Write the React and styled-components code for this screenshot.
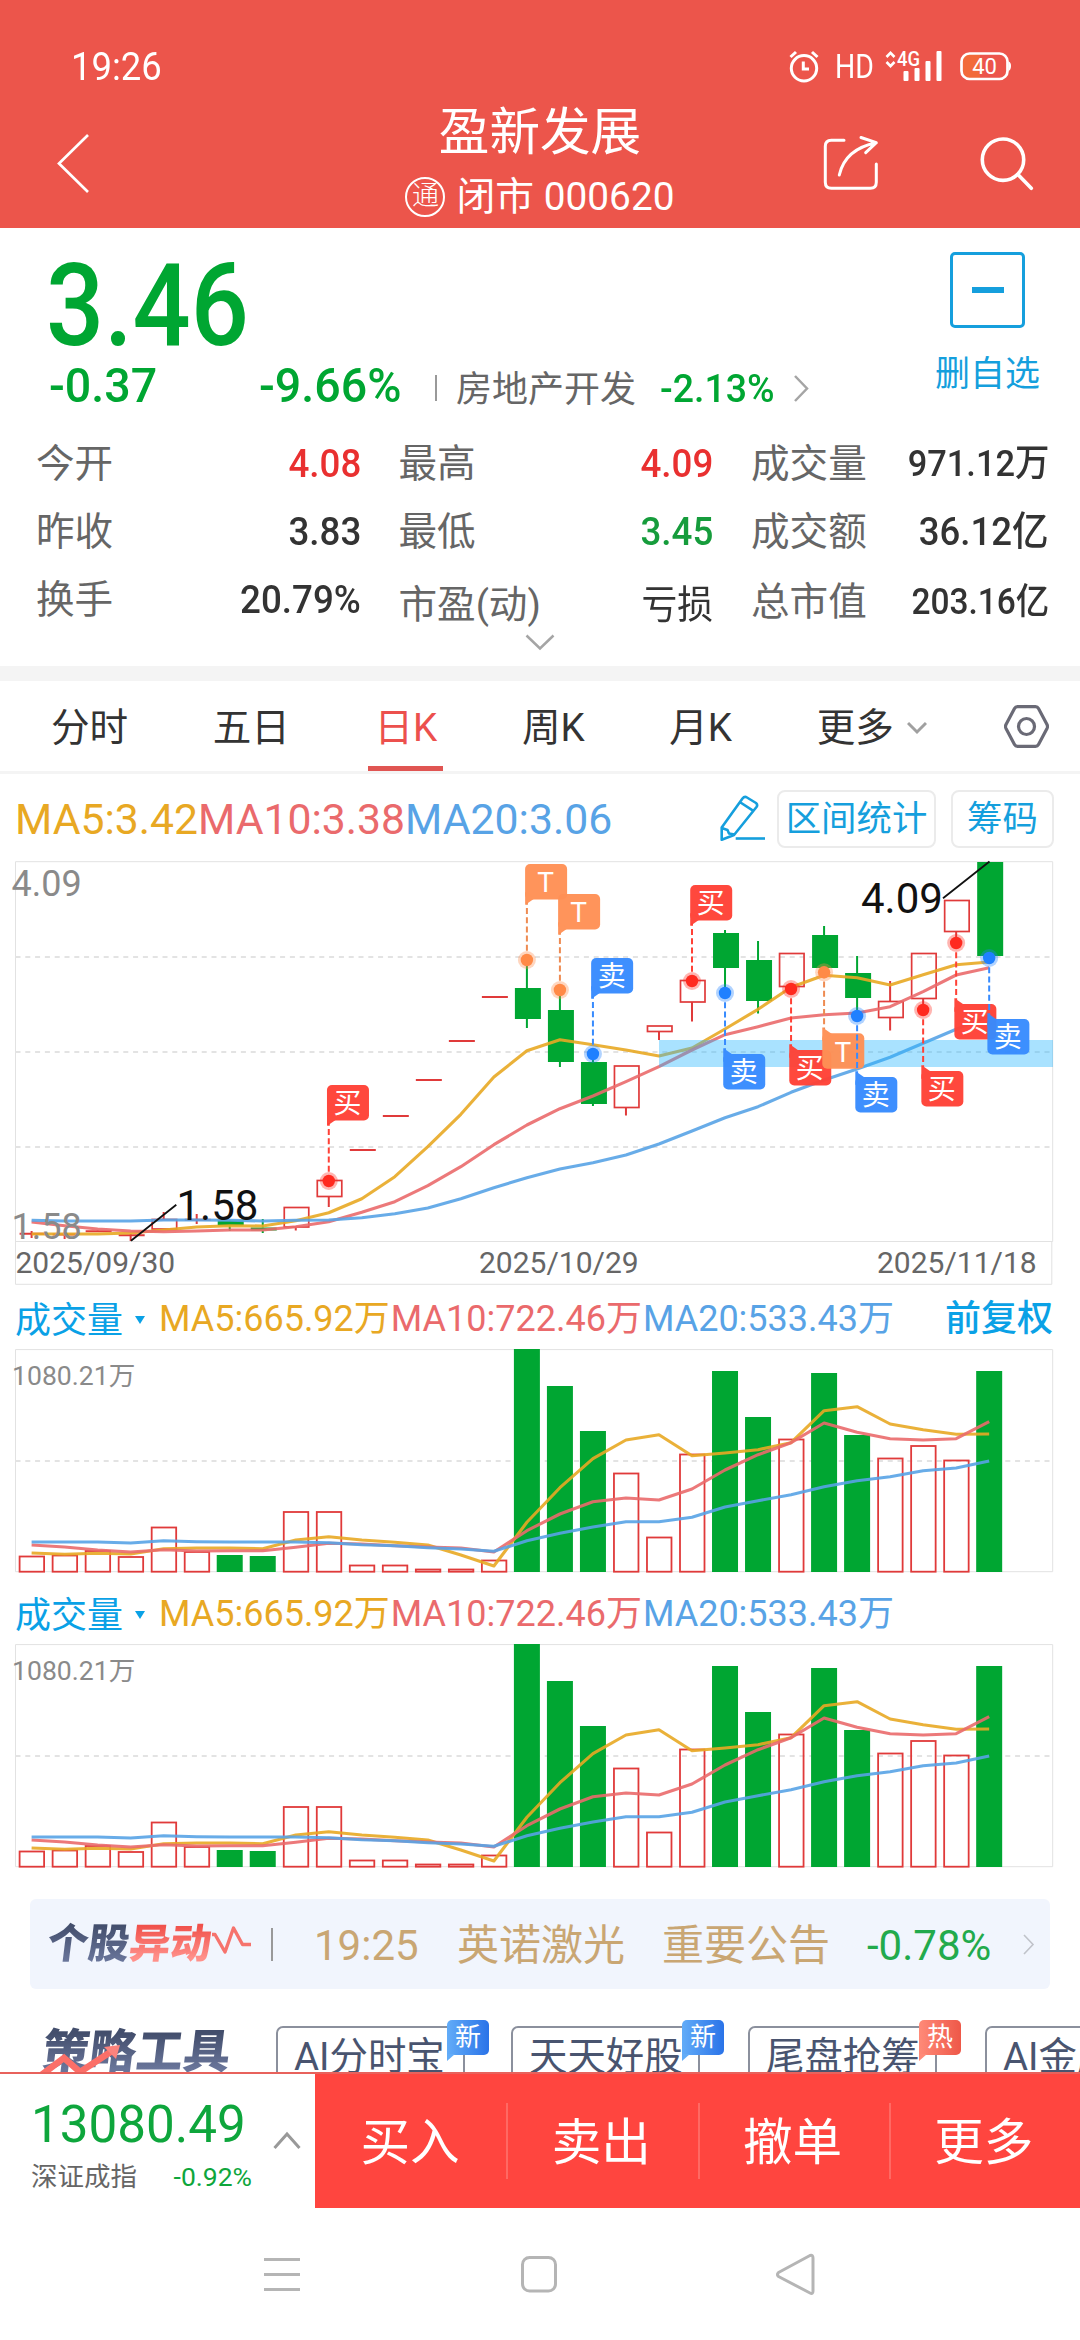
import React from 'react';
import styled, { createGlobalStyle } from 'styled-components';

const Base = {
  Vermelho: '#ec554b',
  VermelhoAcao: '#ff453f',
  Alta: '#e93030',
  Queda: '#00a632',
  Azul: '#159fdd',
  Texto: '#333333',
  Cinza: '#666666',
  CinzaClaro: '#f4f4f4',
  Ma5: '#e8a823',
  Ma10: '#ea6a6c',
  Ma20: '#58a3e6',
  Marinho: '#49546f',
};

const GlobalStyle = createGlobalStyle`
  body {
    margin: 0;
    background: #fff;
    font-family: Roboto, 'Noto Sans CJK SC', sans-serif;
    color: ${Base.Texto};
  }
  * {
    box-sizing: border-box;
  }
  svg {
    display: block;
    flex: none;
  }
`;

const Page = styled.main`
  width: 1080px;
  height: 2340px;
  overflow: hidden;
  background: #fff;
  white-space: nowrap;
`;

/* header */

const Header = styled.header`
  height: 228px;
  padding-top: 44px;
  background: ${Base.Vermelho};
  color: #fff;
`;

const StatusBar = styled.div`
  display: flex;
  justify-content: space-between;
  height: 46px;
  padding: 0 68px 0 71px;
  font-size: 38px;
  line-height: 46px;
`;

const Clock = styled.span`
  transform: scaleX(0.96);
  transform-origin: left;
`;

const StatusIcons = styled.div`
  display: flex;
  align-items: flex-start;
`;

const Hd = styled.span`
  width: 36px;
  margin: 0 14px 0 16px;
  font-size: 33px;
  line-height: 45px;
  transform: scaleX(0.86);
  transform-origin: left;
`;

const TitleBar = styled.div`
  display: grid;
  grid-template-columns: 1fr auto 1fr;
  height: 138px;
`;

const BackButton = styled.button`
  align-self: start;
  padding: 43px 0 0 54px;
  border: 0;
  background: none;
  text-align: left;
`;

const TitleBlock = styled.div`
  display: flex;
  flex-direction: column;
  align-items: center;
  padding-top: 13px;
`;

const StockName = styled.h1`
  margin: 0 0 9px;
  font-size: 50.6px;
  font-weight: 400;
  line-height: 60px;
`;

const StockCode = styled.div`
  display: flex;
  align-items: center;
  font-size: 38.8px;
  line-height: 50px;
`;

const Badge = styled.span`
  width: 40px;
  height: 40px;
  margin-right: 11px;
  border: 2px solid #fff;
  border-radius: 50%;
  font-size: 27px;
  font-weight: 300;
  line-height: 35px;
  text-align: center;
`;

const HeaderActions = styled.div`
  display: flex;
  justify-content: flex-end;
  gap: 94px;
  padding: 41px 39px 0 0;
`;

/* quote */

const Quote = styled.section`
  height: 438px;
`;

const QuoteTop = styled.div`
  display: flex;
  height: 202px;
`;

const QuoteMain = styled.div`
  width: 927px;
  padding: 28px 0 0 49px;
`;

const Price = styled.div`
  margin-left: -3px;
  font-size: 115px;
  font-weight: 500;
  line-height: 100px;
  color: ${Base.Queda};
  transform: scaleX(0.89);
  transform-origin: left;
`;

const ChangeRow = styled.div`
  display: grid;
  grid-template-columns: 210px 176px 21px 204px 133px auto;
  align-items: baseline;
  line-height: 60px;
`;

const Change = styled.span`
  font-size: ${({ $size }) => $size || 48}px;
  font-weight: 500;
  color: ${Base.Queda};
  transform: scaleX(0.97);
  transform-origin: left;
`;

const Industry = styled.span`
  font-size: 36px;
  color: ${Base.Cinza};
`;

const Divider = styled.i`
  align-self: center;
  width: 2px;
  height: ${({ $height }) => $height}px;
  background: #999;
`;

const RowArrow = styled.span`
  align-self: center;
`;

const Favorite = styled.button`
  display: flex;
  flex-direction: column;
  align-items: center;
  width: 121px;
  padding: 24px 0 0;
  border: 0;
  background: none;
  font-family: inherit;
  font-size: 35px;
  line-height: 40px;
  color: ${Base.Azul};
`;

const MinusBox = styled.span`
  display: flex;
  align-items: center;
  justify-content: center;
  width: 75px;
  height: 76px;
  margin-bottom: 27px;
  border: 3px solid ${Base.Azul};
  border-radius: 5px;

  &::after {
    content: '';
    width: 32px;
    height: 6px;
    background: ${Base.Azul};
  }
`;

const Stats = styled.dl`
  display: grid;
  grid-template-columns: 325px 315px 298px;
  column-gap: 37.5px;
  margin: 0;
  padding-left: 36px;
`;

const Stat = styled.div`
  display: flex;
  justify-content: space-between;
  height: 68px;
  padding-top: ${({ $drop }) => $drop || 0}px;
  line-height: 68px;
`;

const StatLabel = styled.dt`
  font-size: 38.6px;
  color: ${Base.Cinza};
`;

const StatValue = styled.dd`
  margin: 0;
  font-size: ${({ $size }) => $size || 39.5}px;
  font-weight: ${({ $light }) => ($light ? 400 : 500)};
  color: ${({ $color }) => $color || Base.Texto};
  transform: scaleX(0.93);
  transform-origin: right;
`;

const Expand = styled.div`
  display: flex;
  justify-content: center;
`;

/* tabs */

const Tabs = styled.nav`
  display: flex;
  gap: 84.6px;
  align-items: center;
  height: 108px;
  padding: 0 30px 0 51px;
  border-top: 15px solid ${Base.CinzaClaro};
  border-bottom: 3px solid ${Base.CinzaClaro};
`;

const Tab = styled.span`
  position: relative;
  display: flex;
  align-items: center;
  gap: 13px;
  padding-top: 3px;
  font-size: 38.6px;
  line-height: 87px;
  color: ${({ $active }) => ($active ? '#ec504d' : Base.Texto)};

  &::after {
    content: '';
    display: ${({ $active }) => ($active ? 'block' : 'none')};
    position: absolute;
    bottom: 0;
    left: calc(50% - 37.5px);
    width: 75px;
    height: 5px;
    background: #e05552;
  }
`;

const TabSettings = styled.span`
  margin-left: -7px;
`;

/* indicators */

const IndicatorBar = styled.div`
  display: flex;
  align-items: center;
  height: 86px;
  padding: 3px 26px 0 15px;
  font-size: 42.7px;
`;

const Ma = styled.span`
  color: ${({ $color }) => $color};
`;

const IndicatorTools = styled.div`
  display: flex;
  align-items: center;
  margin-left: auto;
`;

const ToolButton = styled.button`
  width: ${({ $width }) => $width}px;
  height: 58px;
  margin-left: ${({ $gap }) => $gap}px;
  padding: 0;
  border: 2px solid #ebebeb;
  border-radius: 8px;
  background: #fff;
  font-family: inherit;
  font-size: 35.4px;
  line-height: 54px;
  color: ${Base.Azul};
`;

const VolumeBar = styled.div`
  display: flex;
  align-items: center;
  height: 64px;
  margin-top: ${({ $top }) => $top || 0}px;
  padding: 5px 27px 0 15px;
  font-size: 36px;
  line-height: 59px;
`;

const VolumeName = styled.span`
  display: flex;
  align-items: center;
  gap: 12px;
  width: 144px;
  padding-top: 4px;
  font-size: 36px;
  color: #0aa1e6;
`;

const VolumeMa = styled(Ma)`
  margin-right: 1px;
`;

const Adjust = styled.span`
  margin-left: auto;
  font-size: 36px;
  font-weight: 500;
  color: #0aa1e6;
`;

/* news */

const News = styled.section`
  display: flex;
  align-items: center;
  width: 1020px;
  height: 90px;
  margin: 31px 0 0 30px;
  padding-left: 18px;
  border-radius: 6px;
  background: #f1f5fd;
  font-size: 42px;
  line-height: 90px;
  color: #c9a673;
`;

const Logo = styled.strong`
  margin-top: ${({ $lift }) => -($lift || 0)}px;
  font-family: 'Noto Sans CJK SC', sans-serif;
  font-size: ${({ $size }) => $size}px;
  font-weight: 900;
  line-height: 60px;
  background: ${({ $accent }) =>
    $accent
      ? 'linear-gradient(#f0504a 25%, #ff908a 80%)'
      : 'linear-gradient(#434e6c 25%, #69759a 85%)'};
  background-clip: text;
  color: transparent;
  transform: skewX(-7deg);
`;

const NewsTime = styled.span`
  width: 143px;
  margin-left: 41px;
  padding-top: 3px;
`;

const NewsName = styled.span`
  width: 205px;
  padding-top: 3px;
`;

const NewsChange = styled.span`
  width: 156px;
  padding-top: 3px;
  color: #22aa4c;
`;

/* tools */

const Tools = styled.section`
  display: flex;
  height: 83px;
  padding: 37px 0 0 43px;
  overflow: hidden;
`;

const ToolsLogo = styled.div`
  position: relative;
  flex: none;
  width: 233px;
  margin-top: -8px;

  svg {
    position: absolute;
    top: 22px;
    left: -7px;
  }
`;

const ToolCard = styled.div`
  position: relative;
  flex: none;
  width: 189px;
  height: 84px;
  margin-right: ${({ $gap }) => $gap || 48}px;
  padding-left: 16px;
  border: 2px solid #8b909d;
  border-radius: 7px;
  font-size: 38.4px;
  line-height: 58px;
  color: ${Base.Marinho};
`;

const Tag = styled.span`
  position: absolute;
  top: -8px;
  right: -26px;
  width: 42px;
  height: 35px;
  border-radius: 5px 5px 5px 0;
  background: ${({ $hot }) =>
    $hot
      ? 'linear-gradient(90deg, #ff8a78, #ee5848)'
      : 'linear-gradient(90deg, #62acf8, #2a73e8)'};
  font-size: 26px;
  line-height: 34px;
  text-align: center;
  color: #fff;

  &::after {
    content: '';
    position: absolute;
    top: 34px;
    left: 0;
    border-top: 7px solid ${({ $hot }) => ($hot ? '#ff8a78' : '#62acf8')};
    border-right: 8px solid transparent;
  }
`;

/* footer */

const Footer = styled.footer`
  display: flex;
  height: 136px;
  border-top: 2px solid #e8625c;
`;

const IndexBox = styled.div`
  display: flex;
  justify-content: space-between;
  width: 315px;
  padding: 20px 14px 0 31px;
`;

const IndexValue = styled.div`
  font-size: 51.2px;
  line-height: 62px;
  color: #0ea63c;
`;

const IndexInfo = styled.div`
  display: flex;
  justify-content: space-between;
  width: 221px;
  font-size: 26.5px;
  line-height: 42px;
  color: ${Base.Cinza};
`;

const IndexChange = styled.span`
  color: #0ea63c;
`;

const Actions = styled.div`
  display: flex;
  align-items: center;
  flex: 1;
  background: ${Base.VermelhoAcao};
`;

const Action = styled.button`
  flex: 1;
  height: 76px;
  padding: 0 3px 0 0;
  border: 0;
  border-left: 2px solid ${({ $first }) => ($first ? 'transparent' : '#ff6963')};
  background: none;
  font-family: inherit;
  font-size: 49.6px;
  line-height: 81px;
  color: #fff;
`;

const SystemNav = styled.div`
  display: flex;
  justify-content: space-between;
  height: 131px;
  padding: 43px 264px 0 262px;
`;

/* chart data, in chart pixels */

const centerX = i => 31.6 + 33.02 * i;

// [up, body top, body bottom, wick top, wick bottom]
const candles = [
  [1, 373, 374.5, 371, 378],
  [1, 374, 375, 372, 379],
  [1, 370.5, 372, 370.5, 372],
  [1, 374, 376.5, 374, 381],
  [1, 359.5, 369, 352, 369],
  [1, 359, 360.5, 354, 364],
  [0, 360.5, 365.5, 360, 371],
  [0, 367.5, 370.5, 359, 373],
  [1, 347.5, 367, 347.5, 370.5],
  [1, 320.5, 336.5, 320.5, 347],
  [1, 290, 290, 290, 290],
  [1, 256, 256, 256, 256],
  [1, 220, 220, 220, 220],
  [1, 181, 181, 181, 181],
  [1, 137, 137, 137, 137],
  [0, 128, 159, 103, 168],
  [0, 150, 202, 133, 207],
  [0, 202, 244, 194, 246],
  [1, 206, 247.5, 206, 255.5],
  [1, 166, 171.5, 166, 180],
  [1, 120.5, 142, 120.5, 161.5],
  [0, 73, 108, 70, 133],
  [0, 100, 141, 81, 153.5],
  [1, 93.5, 126.5, 93.5, 126.5],
  [0, 75, 108, 66, 112],
  [0, 113, 138, 96, 156],
  [1, 141.5, 157.5, 121, 170.5],
  [1, 93.5, 138.5, 93.5, 150],
  [1, 40.5, 71.5, 40.5, 83],
  [0, 2, 96, 2, 98],
];

const priceMas = [
  [Base.Ma5, [374, 374, 374, 373, 370, 367, 365.7, 366, 360.7, 352.7, 338.7, 316.7, 286.7, 254.3, 217, 190.7, 179.7, 184.7, 190, 196, 188, 169, 149.3, 127.3, 115.3, 117.7, 125, 114.7, 104.7, 102]],
  [Base.Ma10, [362, 365.7, 369, 371, 371.7, 371, 370, 370, 366.7, 361.7, 352.3, 341.7, 325.7, 306.7, 284.7, 265, 248.7, 236, 221.7, 206.7, 190, 174.7, 166.7, 158, 154.7, 153, 146.7, 131.7, 115, 107.7]],
  [Base.Ma20, [360.3, 361, 361, 361, 360, 360, 360.3, 361, 360.3, 360, 357.7, 353.7, 348, 338.7, 327.7, 317.7, 309, 302.7, 295, 284, 271, 257.7, 246.7, 232.3, 220, 209, 197.3, 183.3, 169.3, 156]],
];

const volumes = [
  207.5, 206.5, 202, 208, 178.5, 203, 206, 207, 163, 163, 216.5, 216.5, 220.5,
  220.5, 211.5, 0, 37, 82, 124.5, 188.5, 105.5, 22, 68, 90.5, 24, 86, 109.5, 97,
  111.5, 22,
];

const volumeMas = [
  [Base.Ma5, [204, 205.3, 204.3, 205, 199.7, 199, 199, 199.7, 191, 187.7, 191, 193.3, 196, 206, 217, 173.3, 138.7, 109.7, 91, 85.7, 106.7, 104, 100.7, 93.7, 61.7, 57.7, 75, 80.7, 85.3, 85]],
  [Base.Ma10, [196, 198, 201, 203, 200.7, 202, 201.7, 201.7, 198.3, 194.3, 195, 196.7, 198, 199, 203, 181.7, 165, 152.7, 149, 151, 140, 121, 105.7, 93.7, 74, 83.3, 89.7, 91, 89.7, 72.7]],
  [Base.Ma20, [193, 193, 193, 194, 191.7, 192.7, 193, 193, 193, 193.7, 195.7, 196.7, 198.7, 200, 202.3, 191.7, 184.3, 178, 172.7, 172.7, 168.3, 158, 151.7, 145.7, 137.7, 131.7, 127.7, 121.7, 119, 112]],
];

const FLAG = {
  buy: { text: '买', fill: '#ff4136', dot: '#ff2a1f' },
  sell: { text: '卖', fill: '#378bfe', dot: '#1f80ff' },
  t: { text: 'T', fill: '#ff9055', dot: '#ff8a47' },
};

// [candle, type, dot y, flag above]
const trades = [
  [9, 'buy', 321, true],
  [15, 't', 100, true],
  [16, 't', 130, true],
  [17, 'sell', 194, true],
  [20, 'buy', 121, true],
  [21, 'sell', 133],
  [23, 'buy', 129],
  [24, 't', 112.3],
  [25, 'sell', 156],
  [27, 'buy', 150],
  [28, 'buy', 83],
  [29, 'sell', 98],
];

const MaLines = ({ series }) =>
  series.map(([color, values]) => (
    <polyline
      key={color}
      points={values.map((y, i) => `${centerX(i)},${y}`).join(' ')}
      fill="none"
      stroke={color}
      strokeWidth="3.1"
      strokeLinejoin="round"
      opacity="0.9"
    />
  ));

const Candle = ({ index, data }) => {
  const [up, top, bottom, high, low] = data;
  const x = centerX(index);
  const color = up ? '#e03a3a' : Base.Queda;
  if (up && bottom - top < 3) {
    return (
      <g stroke={color} strokeWidth="2">
        <path d={`M${x - 12} ${(top + bottom) / 2}h26`} />
        <path d={`M${x} ${high}V${low}`} />
      </g>
    );
  }
  return (
    <g stroke={color} strokeWidth="2">
      <path d={`M${x} ${high}V${top}M${x} ${bottom}V${low}`} />
      {up ? (
        <rect x={x - 11.5} y={top} width="24.5" height={bottom - top} fill="none" strokeWidth="1.7" />
      ) : (
        <rect x={x - 12} y={top} width="26" height={bottom - top} fill={color} stroke="none" />
      )}
    </g>
  );
};

const Trade = ({ data }) => {
  const [index, type, dot, above] = data;
  const { text, fill, dot: dotColor } = FLAG[type];
  const cx = centerX(index);
  const x = cx - 1.8;
  const y = above ? dot - 96 : dot + 61;
  const tail = above
    ? `${x},${y + 28} ${x},${y + 41} ${x + 10},${y + 34}`
    : `${x},${y + 8} ${x},${y - 6} ${x + 10},${y + 1}`;
  return (
    <g>
      <path
        d={`M${cx} ${dot}V${above ? y + 38 : y - 4}`}
        stroke={type === 't' ? '#ee8b52' : fill}
        strokeWidth="2"
        strokeDasharray="6 3.2"
      />
      <circle cx={cx} cy={dot} r="9" fill={dotColor} opacity="0.35" />
      <circle cx={cx} cy={dot} r="6.2" fill={dotColor} />
      <g opacity="0.96">
        <rect x={x} y={y} width="42" height="35.5" rx="5" fill={fill} />
        <polygon points={tail} fill={fill} />
      </g>
      <text x={x + 20.5} y={y + 28.2} fontSize="28" textAnchor="middle" fill="#fff">
        {text}
      </text>
    </g>
  );
};

const PriceChart = () => (
  <svg width="1080" height="425" viewBox="0 0 1080 425">
    <path d="M15.5 1.7H1052.7V381.5M1051.8 381.5V424.3H15.5V1.7M15.5 381.5H1052.7" fill="none" stroke="#e2e2e2" />
    <path d="M15.5 97H1052M15.5 192H1052M15.5 287H1052" stroke="#e3e3e3" strokeWidth="2" strokeDasharray="5 4.8" />
    {candles.map((data, i) => (
      <Candle key={i} index={i} data={data} />
    ))}
    <MaLines series={priceMas} />
    <rect x="659" y="180" width="394" height="27" fill="#29b6ff" opacity="0.4" />
    {trades.map(data => (
      <Trade key={data[0]} data={data} />
    ))}
    <path d="M176.3 344.7L131 380.7M943 38.3L989.5 1.5" stroke="#111" strokeWidth="1.8" />
    <g fill="#8a8a8a" fontSize="36">
      <text x="11.5" y="36">4.09</text>
      <text x="11.5" y="379.3">1.58</text>
    </g>
    <g fill="#111" fontSize="42">
      <text x="176.5" y="360">1.58</text>
      <text x="861" y="53">4.09</text>
    </g>
    <g fill="#666" fontSize="30">
      <text x="15.5" y="413">2025/09/30</text>
      <text x="479" y="413">2025/10/29</text>
      <text x="877" y="413">2025/11/18</text>
    </g>
  </svg>
);

const VolumeChart = () => (
  <svg width="1080" height="224" viewBox="0 0 1080 224">
    <path d="M15.5 0.6H1052.7V222.7H15.5Z" fill="none" stroke="#e2e2e2" />
    <path d="M15.5 112H1052" stroke="#e3e3e3" strokeWidth="2" strokeDasharray="5 4.8" />
    {volumes.map((top, i) => {
      const x = centerX(i);
      return candles[i][0] ? (
        <rect key={i} x={x - 12} y={top} width="24.5" height={222.7 - top} fill="none" stroke="#e03a3a" strokeWidth="1.8" />
      ) : (
        <rect key={i} x={x - 13} y={top} width="26" height={223 - top} fill={Base.Queda} />
      );
    })}
    <MaLines series={volumeMas} />
    <text x="12" y="36" fontSize="26.6" fill="#8a8a8a">1080.21万</text>
  </svg>
);

const VolumePanel = ({ top, adjust }) => (
  <>
    <VolumeBar $top={top}>
      <VolumeName>
        成交量
        <svg width="10" height="12" viewBox="0 0 10 12">
          <path d="M0 0H10L5 8Z" fill="#0aa1e6" />
        </svg>
      </VolumeName>
      <VolumeMa $color={Base.Ma5}>MA5:665.92万</VolumeMa>
      <VolumeMa $color={Base.Ma10}>MA10:722.46万</VolumeMa>
      <VolumeMa $color={Base.Ma20}>MA20:533.43万</VolumeMa>
      {adjust && <Adjust>前复权</Adjust>}
    </VolumeBar>
    <VolumeChart />
  </>
);

const Arrow = ({ d, width, height, color = '#a5a5a5', stroke = 2.5 }) => (
  <svg width={width} height={height} viewBox={`0 0 ${width} ${height}`}>
    <path d={d} fill="none" stroke={color} strokeWidth={stroke} />
  </svg>
);

const stats = [
  { label: '今开', value: '4.08', color: Base.Alta },
  { label: '最高', value: '4.09', color: Base.Alta, drop: -1 },
  { label: '成交量', value: '971.12万', size: 37 },
  { label: '昨收', value: '3.83' },
  { label: '最低', value: '3.45', color: '#169c3c' },
  { label: '成交额', value: '36.12亿', size: 39.3 },
  { label: '换手', value: '20.79%' },
  { label: '市盈(动)', value: '亏损', drop: 5, size: 38.5, light: true },
  { label: '总市值', value: '203.16亿', size: 36, drop: 2 },
];

const tabs = ['分时', '五日', '日K', '周K', '月K'];

const tools = [
  { name: 'AI分时宝', tag: '新', gap: 46 },
  { name: '天天好股', tag: '新' },
  { name: '尾盘抢筹', tag: '热', hot: true },
  { name: 'AI金股池' },
];

const App = () => (
  <Page>
    <GlobalStyle />
    <Header>
      <StatusBar>
        <Clock>19:26</Clock>
        <StatusIcons>
          <svg width="30" height="40" viewBox="0 0 30 40" fill="none" stroke="#fff" strokeWidth="3">
            <circle cx="15" cy="24.3" r="12.7" />
            <path d="M14.3 17.5V25H20M1.5 13L7 8M23 8L28.5 13" />
          </svg>
          <Hd>HD</Hd>
          <svg width="58" height="40" viewBox="0 0 58 40" fill="#fff">
            <path d="M1.5 13L5.5 8.8L9.5 13M1.5 18L5.5 22.2L9.5 18" fill="none" stroke="#fff" strokeWidth="2.6" />
            <text x="12" y="22.3" fontSize="20" fontWeight="500" textLength="23" lengthAdjust="spacingAndGlyphs">
              4G
            </text>
            <rect x="18.5" y="27" width="5" height="10" rx="1" />
            <rect x="29.5" y="24" width="5" height="13" rx="1" />
            <rect x="40.5" y="17" width="5" height="20" rx="1" />
            <rect x="51.5" y="7" width="5" height="30" rx="1" />
          </svg>
          <svg width="69" height="40" viewBox="-17 0 69 40">
            <path d="M10 10H20V34H10Q3 34 3 27V17Q3 10 10 10Z" fill="#f26a3a" />
            <rect x="1.5" y="9.5" width="46" height="25.5" rx="8" fill="none" stroke="#fff" strokeWidth="2.7" />
            <path d="M48.5 17.5Q51 18 51 22T48.5 27Z" fill="#fff" />
            <text x="24.5" y="29.5" fontSize="22" textAnchor="middle" fill="#fff">40</text>
          </svg>
        </StatusIcons>
      </StatusBar>
      <TitleBar>
        <BackButton>
          <Arrow d="M34 2L5 30.5L34 59" width={38} height={61} color="#fff" stroke={2.7} />
        </BackButton>
        <TitleBlock>
          <StockName>盈新发展</StockName>
          <StockCode>
            <Badge>通</Badge>
            闭市 000620
          </StockCode>
        </TitleBlock>
        <HeaderActions>
          <svg width="64" height="64" viewBox="0 0 64 64" fill="none" stroke="#fff" strokeWidth="3" strokeLinecap="round" strokeLinejoin="round">
            <path d="M25 9.3H12.3Q6.3 9.3 6.3 15.3V51.3Q6.3 57.3 12.3 57.3H51.3Q57.3 57.3 57.3 51.3V33" />
            <path d="M20.3 44Q26 18 57.3 11.7M42 6.5L57.3 11.7L46.7 21.7" />
          </svg>
          <svg width="64" height="64" viewBox="0 0 64 64" fill="none" stroke="#fff" strokeWidth="3.6" strokeLinecap="round">
            <circle cx="26" cy="28.7" r="20.7" />
            <path d="M40.7 43.3L54.3 57.3" />
          </svg>
        </HeaderActions>
      </TitleBar>
    </Header>

    <Quote>
      <QuoteTop>
        <QuoteMain>
          <Price>3.46</Price>
          <ChangeRow>
            <Change>-0.37</Change>
            <Change>-9.66%</Change>
            <Divider $height={26} />
            <Industry>房地产开发</Industry>
            <Change $size={38.6}>-2.13%</Change>
            <RowArrow>
              <Arrow d="M2 1L14 13.5L2 26" width={18} height={27} />
            </RowArrow>
          </ChangeRow>
        </QuoteMain>
        <Favorite>
          <MinusBox />
          删自选
        </Favorite>
      </QuoteTop>
      <Stats>
        {stats.map(({ label, value, color, size, drop, light }) => (
          <Stat key={label} $drop={drop}>
            <StatLabel>{label}</StatLabel>
            <StatValue $color={color} $size={size} $light={light}>
              {value}
            </StatValue>
          </Stat>
        ))}
      </Stats>
      <Expand>
        <Arrow d="M1.5 1.5L15 14.5L28.5 1.5" width={30} height={17} />
      </Expand>
    </Quote>

    <Tabs>
      {tabs.map(tab => (
        <Tab key={tab} $active={tab === '日K'}>
          {tab}
        </Tab>
      ))}
      <Tab>
        更多
        <Arrow d="M1 2L10 11L19 2" width={20} height={14} color="#a0a0a0" stroke={3} />
      </Tab>
      <TabSettings>
        <svg width="45" height="43" viewBox="0 0 45 43" fill="none" stroke="#6a6a76" strokeWidth="3.2">
          <path d="M13.5 1.7H31.5Q33.5 1.7 34.5 3.5L43 19.5Q44 21.5 43 23.5L34.5 39.5Q33.5 41.3 31.5 41.3H13.5Q11.5 41.3 10.5 39.5L2 23.5Q1 21.5 2 19.5L10.5 3.5Q11.5 1.7 13.5 1.7Z" />
          <circle cx="22.5" cy="21.5" r="8" />
        </svg>
      </TabSettings>
    </Tabs>

    <IndicatorBar>
      <Ma $color={Base.Ma5}>MA5:3.42</Ma>
      <Ma $color={Base.Ma10}>MA10:3.38</Ma>
      <Ma $color={Base.Ma20}>MA20:3.06</Ma>
      <IndicatorTools>
        <svg width="48" height="48" viewBox="0 0 48 48" fill="none" stroke={Base.Azul} strokeWidth="2.6" strokeLinejoin="round">
          <path d="M2.7 32.5L23.5 3.5Q25.5 1 28 2.5L37 8Q39 9.8 37.5 12L15 40L2.7 44.7ZM21.5 7.5L34 15.7M2.7 33L8.5 35L10 38.5L15.5 39.5" />
          <path d="M16.7 43.5H46" />
        </svg>
        <ToolButton $width={159} $gap={10}>区间统计</ToolButton>
        <ToolButton $width={103} $gap={15}>筹码</ToolButton>
      </IndicatorTools>
    </IndicatorBar>
    <PriceChart />
    <VolumePanel adjust />
    <VolumePanel top={7} />

    <News>
      <Logo $size={41} $lift={8}>个股</Logo>
      <Logo $size={41} $lift={8} $accent>异动</Logo>
      <svg width="59" height="42" viewBox="0 0 59 42">
        <path d="M-2 11.5H3L13 29L21.5 5L30.5 21.5H39" fill="none" stroke="#f6736d" strokeWidth="3.4" strokeLinejoin="round" />
      </svg>
      <Divider $height={33} />
      <NewsTime>19:25</NewsTime>
      <NewsName>英诺激光</NewsName>
      <NewsName>重要公告</NewsName>
      <NewsChange>-0.78%</NewsChange>
      <Arrow d="M1 1L10 10.5L1 20" width={12} height={21} color="#c0c3ca" stroke={1.6} />
    </News>

    <Tools>
      <ToolsLogo>
        <Logo as="div" $size={47}>策略工具</Logo>
        <svg width="90" height="50" viewBox="0 0 90 50">
          <path d="M4 36L28 18L44 32L76 11" fill="none" stroke="#fb6f68" strokeWidth="6.5" />
          <path d="M68 7L84 5L80 19Z" fill="#fb837d" />
        </svg>
      </ToolsLogo>
      {tools.map(({ name, tag, hot, gap }) => (
        <ToolCard key={name} $gap={gap}>
          {name}
          {tag && <Tag $hot={hot}>{tag}</Tag>}
        </ToolCard>
      ))}
    </Tools>

    <Footer>
      <IndexBox>
        <div>
          <IndexValue>13080.49</IndexValue>
          <IndexInfo>
            深证成指
            <IndexChange>-0.92%</IndexChange>
          </IndexInfo>
        </div>
        <svg width="28" height="56" viewBox="0 -38 28 56">
          <path d="M1.5 16L14 2L26.5 16" fill="none" stroke="#999" strokeWidth="3" />
        </svg>
      </IndexBox>
      <Actions>
        {['买入', '卖出', '撤单', '更多'].map((action, i) => (
          <Action key={action} $first={i === 0}>
            {action}
          </Action>
        ))}
      </Actions>
    </Footer>
    <SystemNav>
      <svg width="40" height="48" viewBox="0 0 40 48" stroke="#b5b5b5" strokeWidth="3">
        <path d="M2 8.5H38M2 23.5H38M2 38.5H38" />
      </svg>
      <svg width="40" height="48" viewBox="0 0 40 48" fill="none" stroke="#b5b5b5" strokeWidth="3">
        <rect x="3.5" y="6.5" width="33" height="33.5" rx="7" />
      </svg>
      <svg width="40" height="48" viewBox="0 0 40 48" fill="none" stroke="#b5b5b5" strokeWidth="3" strokeLinejoin="round">
        <path d="M2.5 21.5L34 4.5Q37 3.5 37 7V40Q37 43.5 34 42L2.5 25.5Q0.5 23.5 2.5 21.5Z" />
      </svg>
    </SystemNav>
  </Page>
);

export default App;
